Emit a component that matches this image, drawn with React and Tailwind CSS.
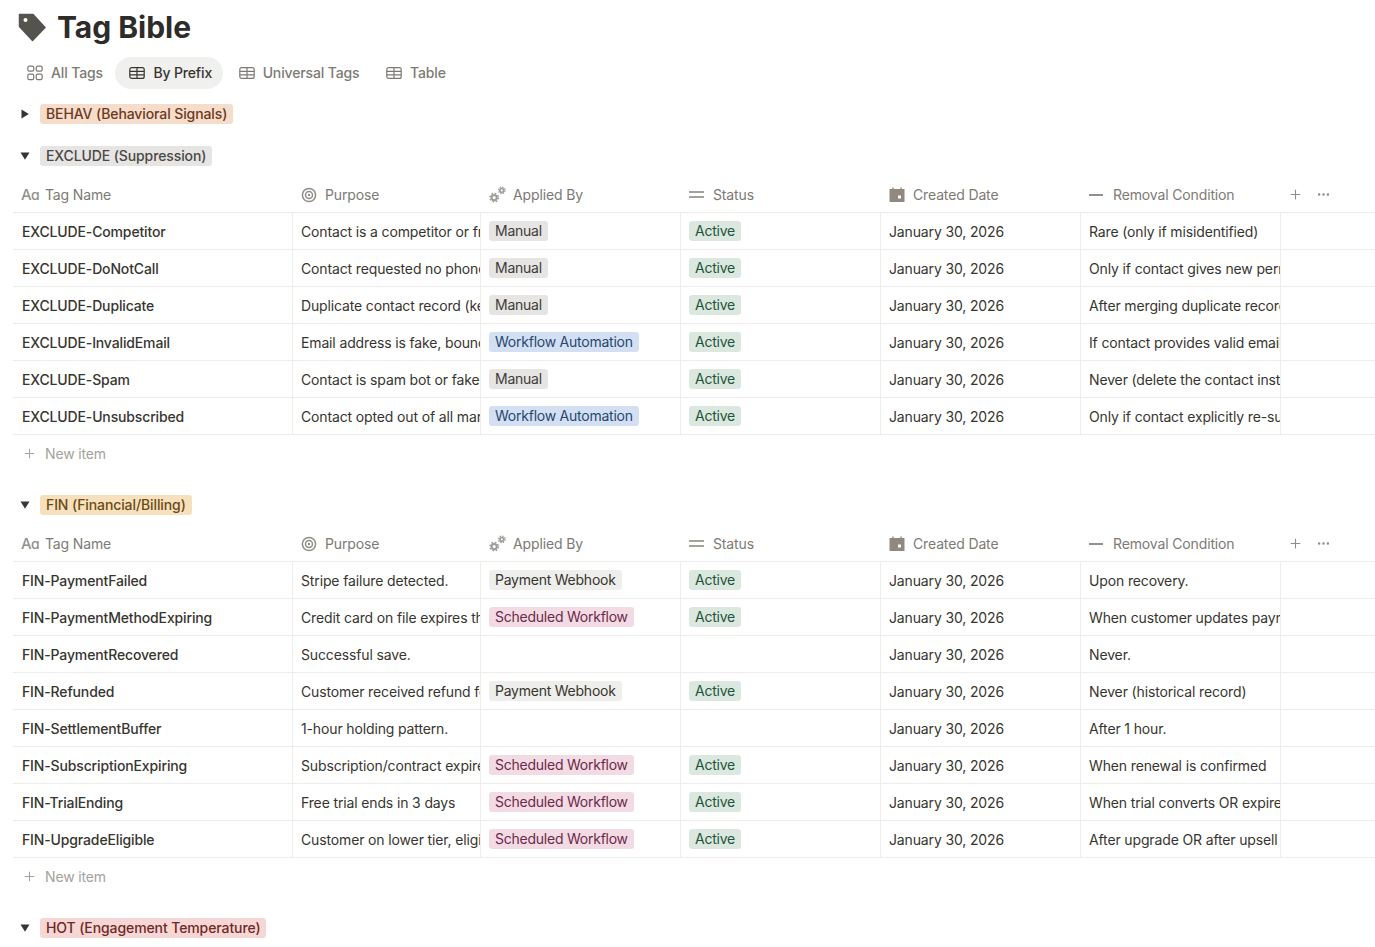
import React from "react";
import { Plus, MoreHorizontal } from "lucide-react";

const font = { fontFamily: "Inter, sans-serif", letterSpacing: "-0.14px" };

const cols = "grid grid-cols-[280px_188px_200px_200px_200px_200px_1fr]";

const tagStyles = {
  Manual: "bg-[#e6e5e3] text-[#3f3d39]",
  "Workflow Automation": "bg-[#d3e0f3] text-[#28476e]",
  "Payment Webhook": "bg-[#eeeeec] text-[#37352f]",
  "Scheduled Workflow": "bg-[#f3dbe4] text-[#6b2a4a]",
};

const exclude = [
  ["EXCLUDE-Competitor", "Contact is a competitor or friend of the team", "Manual", true, "Rare (only if misidentified)"],
  ["EXCLUDE-DoNotCall", "Contact requested no phone calls from us", "Manual", true, "Only if contact gives new permission"],
  ["EXCLUDE-Duplicate", "Duplicate contact record (keep the primary)", "Manual", true, "After merging duplicate records"],
  ["EXCLUDE-InvalidEmail", "Email address is fake, bounced or invalid", "Workflow Automation", true, "If contact provides valid email"],
  ["EXCLUDE-Spam", "Contact is spam bot or fake", "Manual", true, "Never (delete the contact instead)"],
  ["EXCLUDE-Unsubscribed", "Contact opted out of all marketing", "Workflow Automation", true, "Only if contact explicitly re-subscribes"],
];

const fin = [
  ["FIN-PaymentFailed", "Stripe failure detected.", "Payment Webhook", true, "Upon recovery."],
  ["FIN-PaymentMethodExpiring", "Credit card on file expires this month", "Scheduled Workflow", true, "When customer updates payment"],
  ["FIN-PaymentRecovered", "Successful save.", null, false, "Never."],
  ["FIN-Refunded", "Customer received refund for order", "Payment Webhook", true, "Never (historical record)"],
  ["FIN-SettlementBuffer", "1-hour holding pattern.", null, false, "After 1 hour."],
  ["FIN-SubscriptionExpiring", "Subscription/contract expires soon", "Scheduled Workflow", true, "When renewal is confirmed"],
  ["FIN-TrialEnding", "Free trial ends in 3 days", "Scheduled Workflow", true, "When trial converts OR expires"],
  ["FIN-UpgradeEligible", "Customer on lower tier, eligible to upgrade", "Scheduled Workflow", true, "After upgrade OR after upsell"],
];

const TableIcon = ({ className }) => (
  <svg viewBox="0 0 16 14" fill="none" stroke="currentColor" strokeWidth="1.2" className={className}>
    <rect x="0.8" y="1.6" width="14.4" height="10.8" rx="2" />
    <path d="M0.8 5.4H15.2M0.8 8.8H15.2M8 1.6V12.4" />
  </svg>
);

const GalleryIcon = ({ className }) => (
  <svg viewBox="0 0 16 16" fill="none" stroke="currentColor" strokeWidth="1.2" className={className}>
    <rect x="0.8" y="1.2" width="6" height="5" rx="1.6" />
    <rect x="9.2" y="1.2" width="6" height="5" rx="1.6" />
    <rect x="0.8" y="9.2" width="6" height="5.4" rx="1.6" />
    <rect x="9.2" y="9.2" width="6" height="5.4" rx="1.6" />
  </svg>
);

const TagIcon = () => (
  <svg viewBox="0 0 29 29" className="w-[29px] h-[29px] shrink-0">
    <path
      d="M1.5 1.5H15L27 14.5L14.5 27.5L1.5 13.5Z"
      fill="#55534e"
      stroke="#55534e"
      strokeWidth="1.5"
      strokeLinejoin="round"
    />
    <circle cx="7.5" cy="7" r="2" fill="#fff" />
  </svg>
);

const Gears = () => (
  <svg viewBox="0 0 17 17" className="w-[17px] h-[17px] text-[#a09d97]" fill="none" stroke="currentColor">
    <circle cx="5.2" cy="11.6" r="2.6" strokeWidth="2" />
    <circle cx="5.2" cy="11.6" r="4.2" strokeWidth="1.5" strokeDasharray="1.7 1.6" />
    <circle cx="12.8" cy="4.4" r="1.9" strokeWidth="1.7" />
    <circle cx="12.8" cy="4.4" r="3.3" strokeWidth="1.3" strokeDasharray="1.35 1.25" />
  </svg>
);

const Target = () => (
  <svg viewBox="0 0 16 16" className="w-4 h-4 text-[#918e88]" fill="none" stroke="currentColor">
    <circle cx="8" cy="8" r="6.6" strokeWidth="1.5" />
    <circle cx="8" cy="8" r="3.5" strokeWidth="1.5" />
    <circle cx="8" cy="8" r="1.2" fill="currentColor" stroke="none" />
  </svg>
);

const Calendar = () => (
  <svg viewBox="0 0 16 16" className="w-4 h-4 text-[#91897f]">
    <path
      fill="currentColor"
      fillRule="evenodd"
      d="M3.2 0.5H4.6V2H11.4V0.5H12.8V2H15.5V15H0.5V2H3.2ZM9 8.5V11.5H12V8.5Z"
    />
  </svg>
);

const Head = ({ icon, label, iconWidth, className }) => (
  <div className={`flex items-center min-w-0 ${className}`}>
    <span className={`flex items-center shrink-0 ${iconWidth}`}>{icon}</span>
    <span className="text-sm text-[#7d7a75] whitespace-nowrap">{label}</span>
  </div>
);

const Header = () => (
  <div className={`${cols} h-[36px] border-b border-[#ececea] items-center`}>
    <Head
      className="pl-2"
      iconWidth="w-[24px]"
      label="Tag Name"
      icon={
        <span className="text-[15px] leading-none text-[#91908c] tracking-[-0.6px] font-medium">
          A<span className="text-[14px]">ɑ</span>
        </span>
      }
    />
    <Head className="pl-2" iconWidth="w-[24px]" label="Purpose" icon={<Target />} />
    <Head className="pl-2" iconWidth="w-[24px]" label="Applied By" icon={<Gears />} />
    <Head
      className="pl-2"
      iconWidth="w-[24px]"
      label="Status"
      icon={
        <span className="flex flex-col gap-[3px] w-[15px]">
          <span className="h-[2px] bg-[#a5a29c]" />
          <span className="h-[2px] bg-[#a5a29c]" />
        </span>
      }
    />
    <Head className="pl-2" iconWidth="w-[24px]" label="Created Date" icon={<Calendar />} />
    <Head
      className="pl-2"
      iconWidth="w-[24px]"
      label="Removal Condition"
      icon={<span className="h-[2px] w-[14px] bg-[#91908c]" />}
    />
    <div className="flex items-center gap-[13px] pl-[7px] text-[#8f8d88]">
      <Plus size={15} strokeWidth={1.7} />
      <MoreHorizontal size={15} strokeWidth={2} />
    </div>
  </div>
);

const Row = ({ row }) => {
  const [name, purpose, applied, active, removal] = row;
  const cell = "h-[36px] pt-[2px] border-r border-[#ededeb] flex items-center overflow-hidden whitespace-nowrap text-sm text-[#37352f]";
  return (
    <div className={`${cols} h-[37px] border-b border-[#ececea]`}>
      <div className={`${cell} pl-[9px] font-medium`}>{name}</div>
      <div className={`${cell} pl-2`}>{purpose}</div>
      <div className={`${cell} pl-2`}>
        {applied && (
          <span className={`h-5 leading-5 px-1.5 rounded-[3px] -mt-[2px] tracking-[-0.24px] ${tagStyles[applied]}`}>{applied}</span>
        )}
      </div>
      <div className={`${cell} pl-2`}>
        {active && (
          <span className="h-5 leading-5 px-1.5 rounded-[3px] -mt-[2px] tracking-[-0.24px] bg-[#dbe8e0] text-[#1f5438]">Active</span>
        )}
      </div>
      <div className={`${cell} pl-2`}>January 30, 2026</div>
      <div className={`${cell} pl-2`}>{removal}</div>
      <div />
    </div>
  );
};

const Group = ({ label, color, open, className, children }) => (
  <div className={className}>
    <div className="flex items-center h-6">
      <span className="w-[27px] pr-[4px] flex justify-center text-[#37352f]">
        {open ? (
          <svg viewBox="0 0 10 8" className="w-[10px] h-2" fill="currentColor">
            <path d="M0.5 0.5H9.5L5 7.8Z" />
          </svg>
        ) : (
          <svg viewBox="0 0 8 10" className="w-2 h-[10px]" fill="currentColor">
            <path d="M0.5 0.5L7.8 5L0.5 9.5Z" />
          </svg>
        )}
      </span>
      <span className={`h-5 leading-5 px-1.5 rounded-[3px] text-sm font-medium tracking-[-0.1px] whitespace-nowrap ${color}`}>{label}</span>
    </div>
    {children}
  </div>
);

const NewItem = () => (
  <div className="flex items-center h-[37px] pl-[9px] text-sm text-[#a5a29c]">
    <Plus size={15} strokeWidth={1.6} className="mr-[8px]" />
    New item
  </div>
);

const tabs = [
  { label: "All Tags", Icon: GalleryIcon, box: "w-4 h-4" },
  { label: "By Prefix", Icon: TableIcon, box: "w-4 h-[14px]", active: true },
  { label: "Universal Tags", Icon: TableIcon, box: "w-4 h-[14px]" },
  { label: "Table", Icon: TableIcon, box: "w-4 h-[14px]" },
];

export default function App() {
  return (
    <div style={font} className="h-[947px] overflow-hidden bg-white pl-[13px] antialiased">
      <div className="flex items-center gap-[10px] pl-[5px] pt-[10px] h-[44px]">
        <TagIcon />
        <h1 className="text-[30px] leading-[34px] font-bold tracking-[-0.02px] text-[#2e2c29]">Tag Bible</h1>
      </div>
      <div className="flex items-center gap-[1.5px] mt-[13px] h-8">
        {tabs.map((t) => (
          <div
            key={t.label}
            className={`flex items-center gap-[8px] h-8 pl-[14px] pr-[11px] rounded-full text-sm font-medium ${
              t.active ? "bg-[#f0f0ee] text-[#37352f]" : "text-[#7d7a75]"
            }`}
          >
            <t.Icon className={t.box} />
            {t.label}
          </div>
        ))}
      </div>
      <Group className="mt-[13px]" label="BEHAV (Behavioral Signals)" color="bg-[#f5dccb] text-[#6b3a1c]" />
      <Group className="mt-[18px]" label="EXCLUDE (Suppression)" color="bg-[#e6e5e3] text-[#4a4844]" open>
        <div className="mt-[9px]">
          <Header />
          {exclude.map((r) => (
            <Row key={r[0]} row={r} />
          ))}
          <NewItem />
        </div>
      </Group>
      <Group className="mt-[21px]" label="FIN (Financial/Billing)" color="bg-[#f6e1bc] text-[#6b4a17]" open>
        <div className="mt-[9px]">
          <Header />
          {fin.map((r) => (
            <Row key={r[0]} row={r} />
          ))}
          <NewItem />
        </div>
      </Group>
      <Group className="mt-[21px]" label="HOT (Engagement Temperature)" color="bg-[#f6d7d5] text-[#6e2a26]" open />
    </div>
  );
}
